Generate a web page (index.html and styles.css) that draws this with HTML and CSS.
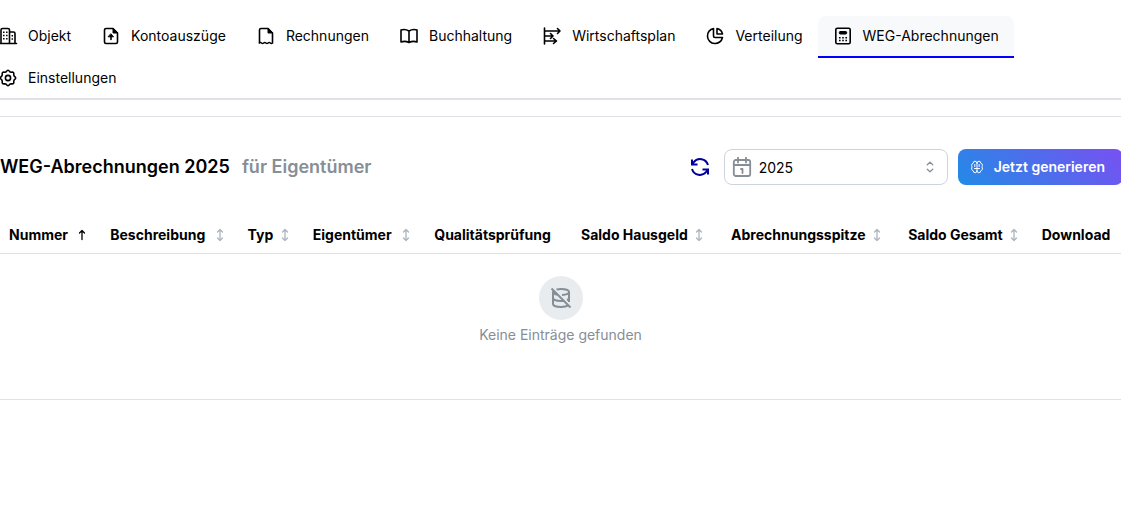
FILE: index.html
```
<!DOCTYPE html>
<html lang="de">
    <head>
        <meta charset="UTF-8" />
        <meta name="viewport" content="width=device-width, initial-scale=1" />
        <title>WEG-Abrechnungen 2025</title>
        <link rel="stylesheet" href="styles.css">
    </head>

    <body>
        <!-- Pfeile für die Tabellensortierung -->
        <svg class="symbols" aria-hidden="true">
            <symbol id="sort" viewBox="0 0 14 14">
                <path d="M7 1.5v11M4.5 4 7 1.5 9.500 4M4.500 10 7 12.500 9.500 10" />
            </symbol>
            <symbol id="sort-up" viewBox="0 0 14 14">
                <path d="M7 2.500v9M4.500 5 7 2.500 9.500 5" />
            </symbol>
        </svg>

        <div class="page">
            <nav class="tabs">
                <a class="tab" href="#">
                    <svg class="icon" viewBox="0 0 20 20">
                        <path d="M1.500 17.500h17M3 17.500V4q0-1.500 1.500-1.500h5.500q1.500 0 1.500 1.500v13.500M11.500 6h4q1.500 0 1.500 1.500v10" />
                        <path class="dots" d="M5.800 5.500v9.500M8.800 5.500v9.500M14.300 9v6.500" />
                    </svg>
                    Objekt
                </a>
                <a class="tab" href="#">
                    <svg class="icon" viewBox="0 0 20 20">
                        <path d="M5 2.500h7l4.500 4.500v9q0 1.500-1.500 1.500H5q-1.500 0-1.500-1.500V4q0-1.500 1.500-1.500z" />
                        <path class="fill" d="M12 2.500V7h4.500zM10 8l2.500 2.800h-5z" />
                        <path d="M10 10v3.500" />
                    </svg>
                    Kontoauszüge
                </a>
                <a class="tab" href="#">
                    <svg class="icon" viewBox="0 0 20 20">
                        <path d="M3.500 17V4q0-1.500 1.500-1.500h7L16.500 7v10q-1.100 1-2.200 0-1.100-1-2.200 0-1.100 1-2.200 0-1.100-1-2.200 0-1.100 1-2.200 0-1-.9-2.200 0z" />
                        <path class="fill" d="M12 2.500V7h4.500z" />
                    </svg>
                    Rechnungen
                </a>
                <a class="tab" href="#">
                    <svg class="icon" viewBox="0 0 20 20">
                        <path d="M10 5Q6 2.500 2 4v12q4-1.500 8 .5 4-2 8-.5V4q-4-1.500-8 1zM10 5v11.500" />
                    </svg>
                    Buchhaltung
                </a>
                <a class="tab" href="#">
                    <svg class="icon" viewBox="0 0 20 20">
                        <path d="M2.500 2v16M2.500 5H18M15.500 2.500 18 5l-2.500 2.500M2.500 10H11M8.500 7.500 11 10l-2.500 2.500M2.500 15H14M11.500 12.500 14.500 15l-3 2.500" />
                    </svg>
                    Wirtschaftsplan
                </a>
                <a class="tab" href="#">
                    <svg class="icon" viewBox="0 0 20 20">
                        <path d="M8.500 2.500a7.600 7.600 0 1 0 9 9H10q-1.500 0-1.500-1.500z" />
                        <path d="M12 2.500q4.500 1 5.500 5.500H12z" />
                    </svg>
                    Verteilung
                </a>
                <a class="tab active" href="#" aria-current="page">
                    <svg class="icon" viewBox="0 0 20 20">
                        <rect x="2.800" y="2.300" width="14.400" height="15.400" rx="1.500" />
                        <rect class="fill" x="6.300" y="5.500" width="7.400" height="2.500" rx="1" />
                        <path class="dots" d="M6 11.800h8M6 14.500h8" />
                    </svg>
                    WEG-Abrechnungen
                </a>
                <a class="tab" href="#">
                    <svg class="icon" viewBox="0 0 20 20">
                        <path d="M8.300 3.700Q10 .9 11.700 3.700l1.500.6q3.200-.8 2.500 2.500l.6 1.500q2.800 1.700 0 3.400l-.6 1.500q.7 3.300-2.500 2.500l-1.500.6q-1.700 2.800-3.400 0l-1.500-.6q-3.200.8-2.500-2.500l-.6-1.500q-2.800-1.700 0-3.400l.6-1.500q-.7-3.300 2.500-2.500z" />
                        <circle cx="10" cy="10" r="2.600" />
                    </svg>
                    Einstellungen
                </a>
            </nav>

            <main class="content">
                <header class="toolbar">
                    <h1>WEG-Abrechnungen 2025 <span>für Eigentümer</span></h1>
                    <div class="actions">
                        <button class="refresh" type="button" aria-label="Aktualisieren">
                            <svg viewBox="0 0 20 20">
                                <path d="M18 8A8.200 8.200 0 0 0 3.500 5.500L2 7.500M2 12a8.200 8.200 0 0 0 14.500 2.500l1.500-2M2 2.500v5h5.500M18 17.500v-5h-5.500" />
                            </svg>
                        </button>
                        <div class="year">
                            <svg class="calendar" viewBox="0 0 20 20">
                                <rect x="1.800" y="3" width="16.400" height="16" rx="2" />
                                <path d="M2 8h16M6 .5v5M14 .5v5M9 12h1.500v4" />
                            </svg>
                            <select aria-label="Jahr">
                                <option>2025</option>
                            </select>
                            <svg class="chevrons" viewBox="0 0 16 16">
                                <path d="M4.800 5.500 8 2.500 11.200 5.500M4.800 10.500 8 13.500 11.200 10.500" />
                            </svg>
                        </div>
                        <button class="generate" type="button">
                            <svg viewBox="0 0 14 14">
                                <path d="M7 3v8M7 3q-.3-1.800-2-1.800T3.200 3.200Q1.300 4 1.600 5.500q.2 1 .6 1.500-1 1-.5 2.300.4 1.200 1.500 1.500.2 2 1.900 2T7 11M7 3q.3-1.800 2-1.800t1.800 2q1.900.8 1.600 2.300-.2 1-.6 1.500 1 1 .5 2.300-.4 1.200-1.500 1.500-.2 2-1.900 2T7 11M4.800 4.500v2M9.200 4.500v2M4.500 8.500h5" />
                            </svg>
                            Jetzt generieren
                        </button>
                    </div>
                </header>

                <table class="list">
                    <colgroup>
                        <col class="w-nummer">
                        <col class="w-beschreibung">
                        <col class="w-typ">
                        <col class="w-eigentuemer">
                        <col class="w-pruefung">
                        <col class="w-hausgeld">
                        <col class="w-spitze">
                        <col class="w-gesamt">
                        <col>
                    </colgroup>
                    <thead>
                        <tr>
                            <th aria-sort="ascending"><div class="head">Nummer <svg class="sorted"><use href="#sort-up" /></svg></div></th>
                            <th><div class="head">Beschreibung <svg><use href="#sort" /></svg></div></th>
                            <th><div class="head">Typ <svg><use href="#sort" /></svg></div></th>
                            <th><div class="head">Eigentümer <svg><use href="#sort" /></svg></div></th>
                            <th>Qualitätsprüfung</th>
                            <th><div class="head right">Saldo Hausgeld <svg><use href="#sort" /></svg></div></th>
                            <th><div class="head right">Abrechnungsspitze <svg><use href="#sort" /></svg></div></th>
                            <th><div class="head right">Saldo Gesamt <svg><use href="#sort" /></svg></div></th>
                            <th>Download</th>
                        </tr>
                    </thead>
                    <tbody>
                        <tr>
                            <td colspan="9">
                                <div class="empty">
                                    <div class="circle">
                                        <svg viewBox="0 0 24 24">
                                            <path d="M13 9c4-.2 7-1.500 7-3 0-1.700-3.600-3-8-3-1.700 0-3.200.2-4.500.5M4.700 4.700C4.300 5.100 4 5.500 4 6c0 1.200 2 2.300 4.700 2.700M4 6v6c0 1.700 3.600 3 8 3 1 0 1.900-.1 2.800-.2M18 14c1.200-.5 2-1.200 2-2V6M4 12v6c0 1.700 3.600 3 8 3 3.200 0 6-.7 7.300-1.700M20 16v-4M2.500 2.500 21.500 21.500" />
                                        </svg>
                                    </div>
                                    <p>Keine Einträge gefunden</p>
                                </div>
                            </td>
                        </tr>
                    </tbody>
                </table>
            </main>
        </div>
    </body>
</html>
```
FILE: styles.css
```
* {
    box-sizing: border-box;
}

body {
    margin: 0;
    overflow-x: hidden;
    background: #fff;
    color: #000;
    font: 14px/20px Inter, "Liberation Sans", sans-serif;
}

svg {
    flex: none;
    fill: none;
    stroke: currentColor;
    stroke-linecap: round;
    stroke-linejoin: round;
}

.symbols {
    display: none;
}

.page {
    margin: 0 -2px;
    padding-top: 16px;
}

/* Reiter */
.tabs {
    display: flex;
    flex-wrap: wrap;
    margin-left: -15px;
    /* graue Linie liegt hinter dem unteren Rand der Reiter */
    box-shadow: inset 0 -2px #dee2e6;
}

.tab {
    display: flex;
    align-items: center;
    gap: 10px;
    padding: 10px 15px;
    border-bottom: 2px solid transparent;
    color: inherit;
    text-decoration: none;
}

.tab.active {
    background: #f8f9fa;
    border-radius: 8px 8px 0 0;
    border-bottom-color: #00f;
}

.icon {
    width: 20px;
    height: 20px;
    stroke-width: 1.6;
}

.icon .fill {
    fill: currentColor;
    stroke-width: 1;
}

.icon .dots {
    stroke-width: 1.5;
    stroke-linecap: butt;
    stroke-dasharray: 1.6 1.6;
}

/* Inhalt */
.content {
    margin-top: 16px;
    border-top: 1px solid #dee2e6;
}

.toolbar {
    display: flex;
    justify-content: space-between;
    align-items: center;
    padding: 32px 0;
}

h1 {
    display: flex;
    gap: 12px;
    margin: 0;
    padding-left: 2px;
    font-size: 18px;
    font-weight: 600;
    line-height: 28px;
}

h1 span {
    color: #868e96;
}

.actions {
    display: flex;
    align-items: center;
    gap: 10px;
}

button {
    border: 0;
    font: inherit;
    cursor: pointer;
}

.refresh {
    display: flex;
    padding: 4px;
    background: none;
    color: #00009c;
}

.refresh svg {
    width: 20px;
    height: 20px;
    stroke-width: 2;
    stroke-linecap: butt;
    stroke-linejoin: miter;
}

.year {
    display: flex;
    align-items: center;
    position: relative;
    width: 224px;
    height: 36px;
}

.year svg {
    position: absolute;
    color: #868e96;
    pointer-events: none;
}

.year .calendar {
    left: 8px;
    width: 20px;
    height: 20px;
    stroke-width: 1.8;
}

.year .chevrons {
    right: 10px;
    width: 16px;
    height: 14px;
    stroke-width: 1.4;
}

select {
    width: 100%;
    height: 100%;
    padding: 2px 34px 0;
    border: 1px solid #ced4da;
    border-radius: 8px;
    appearance: none;
    background: #fff;
    color: inherit;
    font: inherit;
}

.generate {
    display: flex;
    align-items: center;
    gap: 10px;
    height: 36px;
    padding: 0 18px 0 12px;
    border-radius: 8px;
    background: linear-gradient(45deg, #228be6, #7950f2);
    color: #fff;
    font-weight: 600;
}

.generate svg {
    width: 14px;
    height: 14px;
}

/* Tabelle */
.list {
    width: 100%;
    table-layout: fixed;
    border-collapse: collapse;
}

.w-nummer { width: 9%; }
.w-beschreibung { width: 12.2%; }
.w-typ { width: 5.8%; }
.w-eigentuemer { width: 10.8%; }
.w-pruefung { width: 13%; }
.w-hausgeld { width: 13%; }
.w-spitze { width: 15.8%; }
.w-gesamt { width: 12.2%; }

th {
    padding: 8px 10px 8px 11px;
    font-weight: 700;
    text-align: left;
    white-space: nowrap;
}

tr {
    border-bottom: 1px solid #dee2e6;
}

.head {
    display: flex;
    align-items: center;
    justify-content: space-between;
}

.head.right {
    justify-content: flex-end;
    gap: 4px;
}

.head svg {
    width: 14px;
    height: 14px;
    color: #adb5bd;
    stroke-width: 1.3;
}

.head .sorted {
    color: #000;
}

td {
    padding: 22px 10px 54px;
}

.empty {
    display: flex;
    flex-direction: column;
    align-items: center;
    gap: 5px;
    color: #868e96;
}

.circle {
    display: flex;
    align-items: center;
    justify-content: center;
    width: 44px;
    height: 44px;
    border-radius: 50%;
    background: #e9ecef;
}

.circle svg {
    width: 24px;
    height: 24px;
    stroke-width: 2;
    stroke-linecap: butt;
}

.empty p {
    margin: 0;
}
```
